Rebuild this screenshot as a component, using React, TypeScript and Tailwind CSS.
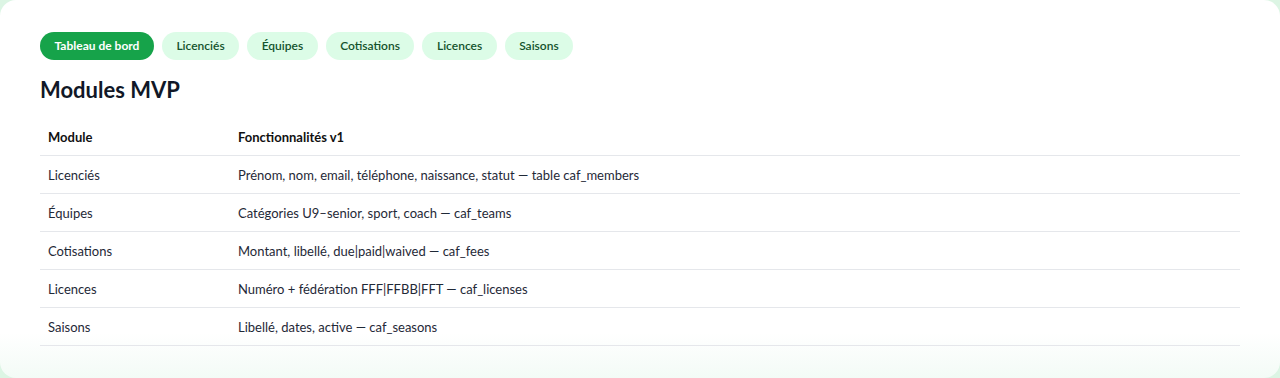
import React from 'react';

const tabs = ['Tableau de bord', 'Licenciés', 'Équipes', 'Cotisations', 'Licences', 'Saisons'];

const modules: [string, string][] = [
  ['Licenciés', 'Prénom, nom, email, téléphone, naissance, statut — table caf_members'],
  ['Équipes', 'Catégories U9–senior, sport, coach — caf_teams'],
  ['Cotisations', 'Montant, libellé, due|paid|waived — caf_fees'],
  ['Licences', 'Numéro + fédération FFF|FFBB|FFT — caf_licenses'],
  ['Saisons', 'Libellé, dates, active — caf_seasons'],
];

const App: React.FC = () => {
  return (
    <div className="min-h-[378px] bg-[#dcf5e4] font-['Lato','Noto_Sans',sans-serif]">
      <div className="h-[378px] rounded-2xl bg-gradient-to-b from-white from-88% to-[#f3fbf6] px-10 pt-8 pb-8">
        <nav className="flex items-center gap-2">
          {tabs.map((tab, i) => (
            <button
              key={tab}
              className={
                i === 0
                  ? 'h-7 px-[14.5px] rounded-full bg-[#16a34a] text-white text-xs font-bold'
                  : 'h-7 px-[14.5px] rounded-full bg-[#dcfce7] text-[#14532d] text-xs font-semibold'
              }
            >
              {tab}
            </button>
          ))}
        </nav>

        <h2 className="mt-4 text-[22px] leading-7 font-bold text-[#111827]">Modules MVP</h2>

        <div className="mt-[14px] text-[13px] leading-[18px] text-[#1f2937]">
          <div className="grid grid-cols-[190px_1fr] h-[38px] items-center border-b border-[#e5e7eb] font-bold text-[#111]">
            <div className="px-2">Module</div>
            <div className="px-2">Fonctionnalités v1</div>
          </div>
          {modules.map(([name, desc]) => (
            <div key={name} className="grid grid-cols-[190px_1fr] h-[38px] items-center border-b border-[#e5e7eb]">
              <div className="px-2">{name}</div>
              <div className="px-2">{desc}</div>
            </div>
          ))}
        </div>
      </div>
    </div>
  );
};

export default App;
